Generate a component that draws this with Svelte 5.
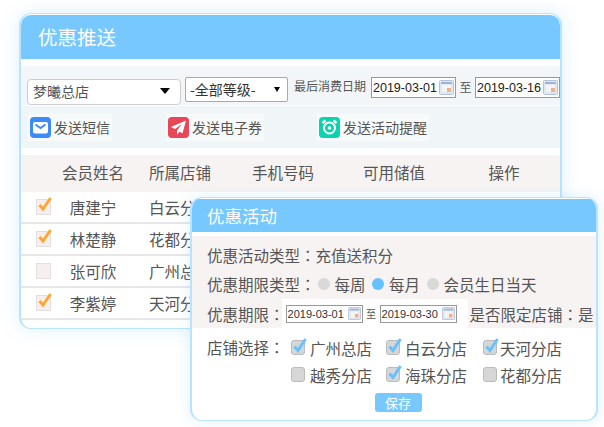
<script>
    const members = [
        { name: "唐建宁", store: "白云分店", checked: true },
        { name: "林楚静", store: "花都分店", checked: true },
        { name: "张可欣", store: "广州总店", checked: false },
        { name: "李紫婷", store: "天河分店", checked: true },
    ];
    const stores = [
        { name: "广州总店", checked: true },
        { name: "白云分店", checked: true },
        { name: "天河分店", checked: true },
        { name: "越秀分店", checked: false },
        { name: "海珠分店", checked: true },
        { name: "花都分店", checked: false },
    ];
</script>

{#snippet calendar(size)}
    <svg class="cal" width={size} height={size} viewBox="0 0 15 15">
        <rect x="0.5" y="0.5" width="14" height="14" rx="1" fill="#dfe7f3" stroke="#b4c2d6" />
        <rect x="2" y="2" width="11" height="2" fill="#9fb4d4" />
        <rect x="3" y="5" width="9" height="7" fill="#f6f4f2" />
        <rect x="8" y="8" width="4" height="4" fill="#eeb08e" />
    </svg>
{/snippet}

<div class="page">
    <section class="panel">
        <h1>优惠推送</h1>
        <div class="filters">
            <div class="select store-select">梦曦总店<i></i></div>
            <div class="select level-select">-全部等级-<i></i></div>
            <span class="label">最后消费日期</span>
            <div class="date">2019-03-01{@render calendar(15)}</div>
            <span class="to">至</span>
            <div class="date">2019-03-16{@render calendar(15)}</div>
        </div>
        <div class="actions">
            <span class="action sms">
                <svg width="21" height="21" viewBox="0 0 21 21">
                    <rect width="21" height="21" rx="4" fill="#3d8bfa" />
                    <rect x="3" y="5" width="15" height="11.500" rx="2" fill="#fff" />
                    <path d="M5.500 7.500l5 3.600 5-3.600" fill="none" stroke="#3d8bfa" stroke-width="1.800" />
                </svg>
                发送短信
            </span>
            <span class="action coupon">
                <svg width="21" height="21" viewBox="0 0 21 21">
                    <rect width="21" height="21" rx="4" fill="#e8475a" />
                    <path d="M18 3.500L3 10l4 2 7-5-5 6.500v4l2.500-2.800 3 1.500z" fill="#fff" />
                </svg>
                发送电子券
            </span>
            <span class="action remind">
                <svg width="21" height="21" viewBox="0 0 21 21">
                    <rect width="21" height="21" rx="4" fill="#0bd3ae" />
                    <circle cx="10.500" cy="11" r="5.500" fill="none" stroke="#fff" stroke-width="2" />
                    <circle cx="10.500" cy="11" r="1.800" fill="#fff" />
                    <path d="M3.500 6L6.500 3.500M17.500 6L14.500 3.500" stroke="#fff" stroke-width="2.500" />
                </svg>
                发送活动提醒
            </span>
        </div>
        <div class="table">
            <div class="row head">
                <span></span>
                <span class="center">会员姓名</span>
                <span class="store-col">所属店铺</span>
                <span class="center">手机号码</span>
                <span class="center">可用储值</span>
                <span class="center">操作</span>
            </div>
            {#each members as m}
                <div class="row">
                    <span class="check-cell">
                        <span class="orange-box">
                            {#if m.checked}
                                <svg width="18" height="18" viewBox="0 0 18 18">
                                    <path d="M3.500 9l3.500 4L14.500 2" fill="none" stroke="#ffa733" stroke-width="3" />
                                </svg>
                            {/if}
                        </span>
                    </span>
                    <span class="center">{m.name}</span>
                    <span class="store-col">{m.store}</span>
                    <span></span>
                    <span></span>
                    <span></span>
                </div>
            {/each}
        </div>
    </section>

    <section class="modal">
        <h2>优惠活动</h2>
        <div class="modal-top">
            <p class="line first">优惠活动类型<span class="colon">：</span>充值送积分</p>
            <p class="line second">
                优惠期限类型<span class="colon">：</span>
                <span class="radio"></span><span class="opt">每周</span>
                <span class="radio on"></span><span class="opt">每月</span>
                <span class="radio"></span><span class="opt">会员生日当天</span>
            </p>
            <div class="line third">
                <span>优惠期限<span class="colon">：</span></span>
                <div class="dates">
                    <div class="date small">2019-03-01{@render calendar(13)}</div>
                    <span class="to small">至</span>
                    <div class="date small">2019-03-30{@render calendar(13)}</div>
                </div>
                <span class="limit">是否限定店铺<span class="colon">：</span>是</span>
            </div>
        </div>
        <div class="store-pick">
            <span class="pick-label">店铺选择<span class="colon">：</span></span>
            <div class="store-grid">
                {#each stores as s}
                    <span class="store">
                        <span class="grey-box">
                            {#if s.checked}
                                <svg width="18" height="18" viewBox="0 0 18 18">
                                    <path d="M3.500 9.500l3.500 4L14.500 2" fill="none" stroke="#66c2ff" stroke-width="3" />
                                </svg>
                            {/if}
                        </span>
                        {s.name}
                    </span>
                {/each}
            </div>
        </div>
        <div class="save"><button>保存</button></div>
    </section>
</div>

<style>
    :global(body) {
        background: #fff;
        font-family: "Noto Sans CJK SC", "Liberation Sans", sans-serif;
        color: #555;
    }

    .page {
        position: relative;
        width: 604px;
        height: 427px;
        padding: 13px 0 0 19px;
        box-sizing: border-box;
        overflow: hidden;
    }

    .panel {
        width: 543px;
        height: 316px;
        box-sizing: border-box;
        padding-top: 1px;
        border: 1px solid #b8e4ff;
        border-left-width: 2px;
        border-right-width: 2px;
        border-radius: 12px;
        background: #fff;
        box-shadow: 0 0 18px rgba(120, 200, 255, 0.25);
        overflow: hidden;
    }

    h1 {
        height: 44px;
        margin: 0;
        padding-left: 17px;
        background: #76c8ff;
        color: #fff;
        font-size: 19.500px;
        font-weight: 400;
        line-height: 43px;
        border-radius: 10px 10px 0 0;
    }

    .filters {
        display: flex;
        align-items: flex-start;
        height: 39px;
        margin-top: 7px;
        padding: 11px 0 0 6px;
        box-sizing: border-box;
        background: #f2f6f9;
        font-size: 12px;
    }

    .select {
        display: flex;
        align-items: center;
        justify-content: space-between;
        box-sizing: border-box;
        background: #fff;
        color: #555;
        font-size: 14px;
    }

    .select i {
        width: 0;
        height: 0;
        border: 5px solid transparent;
        border-top: 6px solid #000;
        border-bottom: 0;
    }

    .store-select {
        width: 154px;
        height: 26px;
        margin-top: 2px;
        padding: 0 10px 2px 5px;
        border: 1px solid #ccc;
        border-radius: 4px;
    }

    .level-select {
        width: 103px;
        height: 25px;
        margin-left: 4px;
        padding: 0 7px 1px 4px;
        border: 1px solid #aaa;
        border-radius: 2px;
        color: #333;
    }

    .level-select i {
        border-width: 5px 3.500px 0;
    }

    .label {
        margin-left: 6px;
        line-height: 18px;
        white-space: nowrap;
    }

    .date {
        display: flex;
        align-items: center;
        justify-content: space-between;
        width: 85px;
        height: 21px;
        box-sizing: border-box;
        padding: 0 1px 0 1px;
        border: 1px solid #999;
        background: #fff;
        color: #222;
        font-family: "Liberation Sans", sans-serif;
        font-size: 12.500px;
        white-space: nowrap;
    }

    .label + .date {
        margin-left: 5px;
    }

    .to {
        width: 19px;
        text-align: center;
        font-size: 12px;
        line-height: 20px;
    }

    .actions {
        display: flex;
        align-items: center;
        height: 42px;
        margin-top: 1px;
        background: #f0f5f8;
        font-size: 14px;
    }

    .action {
        display: flex;
        align-items: center;
        gap: 3px;
        padding: 3px 2px;
        background: #f7fafb;
        white-space: nowrap;
    }

    .sms {
        margin: 0 54px 0 7px;
    }

    .coupon {
        margin-right: 53px;
    }

    .table {
        margin-top: 7px;
        font-size: 15.500px;
    }

    .row {
        display: grid;
        grid-template-columns: 32px 80px 108px 84px 138px 82px;
        align-items: center;
        height: 32px;
        padding-bottom: 1px;
        box-sizing: border-box;
        border-bottom: 2px solid #e6e6e6;
    }

    .head {
        height: 37px;
        padding-bottom: 3px;
        background: #f7f3f2;
        border-bottom: 0;
    }

    .center {
        text-align: center;
    }

    .store-col {
        padding-left: 16px;
        white-space: nowrap;
    }

    .check-cell {
        display: flex;
        padding-left: 15px;
    }

    .orange-box {
        position: relative;
        width: 13px;
        height: 14px;
        flex: none;
        border: 1px solid #e4e0df;
        background: #f5f0ef;
    }

    .orange-box svg,
    .grey-box svg {
        position: absolute;
        left: -1px;
        top: -4px;
    }

    .modal {
        position: absolute;
        left: 190px;
        top: 197px;
        width: 408px;
        height: 224px;
        box-sizing: border-box;
        padding-top: 1px;
        border: 1px solid #b8e4ff;
        border-left-width: 2px;
        border-right-width: 2px;
        border-radius: 12px;
        background: #fff;
        box-shadow: 0 0 14px rgba(120, 200, 255, 0.25);
        overflow: hidden;
    }

    h2 {
        height: 33px;
        margin: 0;
        padding-left: 15px;
        background: #76c8ff;
        color: #fff;
        font-size: 17.500px;
        font-weight: 400;
        line-height: 33px;
    }

    .modal-top {
        height: 92px;
        margin-top: 4px;
        padding-left: 15px;
        background: #f8f3f3;
        font-size: 15.500px;
    }

    .colon {
        font-family: "Noto Sans CJK TC", sans-serif;
    }

    .line {
        display: flex;
        align-items: center;
        margin: 0;
        white-space: nowrap;
    }

    .first {
        height: 37px;
    }

    .second {
        height: 22px;
    }

    .third {
        height: 33px;
        padding-top: 4px;
        box-sizing: border-box;
    }

    .radio {
        width: 12px;
        height: 12px;
        margin: 0 5px 0 3px;
        border-radius: 50%;
        background: #d9d9d9;
    }

    .radio.on {
        background: #66c2ff;
    }

    .opt {
        margin-right: 3.500px;
    }

    .colon + .radio {
        margin-left: 2px;
    }

    .dates {
        display: flex;
        align-items: center;
        flex: none;
        width: 186px;
        height: 100%;
        padding-left: 4px;
        margin-left: -3px;
        box-sizing: border-box;
        background: #fff;
    }

    .date.small {
        width: 77px;
        height: 18px;
        font-size: 11px;
        color: #333;
    }

    .to.small {
        width: 17px;
        font-size: 10px;
    }

    .limit {
        margin-left: 2px;
    }

    .store-pick {
        display: flex;
        margin-top: 6px;
        padding-left: 15px;
        font-size: 15.500px;
    }

    .pick-label {
        width: 84px;
        line-height: 27px;
    }

    .store-grid {
        display: grid;
        grid-template-columns: 95px 97px 90px;
        grid-auto-rows: 27px;
    }

    .store {
        display: flex;
        align-items: center;
        gap: 5px;
        white-space: nowrap;
    }

    .store:nth-child(3n) {
        gap: 3px;
    }

    .grey-box {
        position: relative;
        width: 12px;
        height: 13px;
        flex: none;
        border: 1px solid #bbb;
        border-radius: 3px;
        background: #d6d6d6;
    }

    .save {
        display: flex;
        justify-content: center;
        margin-top: 5px;
        padding-left: 8px;
    }

    button {
        width: 47px;
        height: 19px;
        padding: 0;
        border: 0;
        border-radius: 3px;
        background: #76c8ff;
        color: #fff;
        font: 13px "Noto Sans CJK SC", sans-serif;
    }
</style>
